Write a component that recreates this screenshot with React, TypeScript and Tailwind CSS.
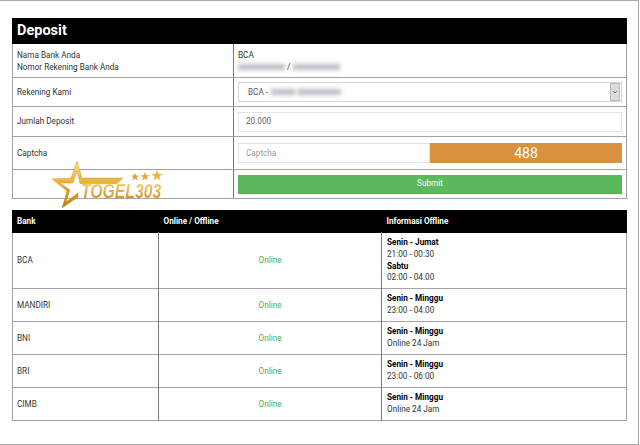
import type { ReactNode } from 'react';

const BANKS = [
  { name: 'BCA', tall: true, info: [['Senin - Jumat', '21:00 - 00:30'], ['Sabtu', '02:00 - 04.00']] },
  { name: 'MANDIRI', info: [['Senin - Minggu', '23:00 - 04.00']] },
  { name: 'BNI', info: [['Senin - Minggu', 'Online 24 Jam']] },
  { name: 'BRI', info: [['Senin - Minggu', '23:00 - 06:00']] },
  { name: 'CIMB', info: [['Senin - Minggu', 'Online 24 Jam']] },
];

function FormRow({ label, height, children, last }: { label: ReactNode; height: string; children?: ReactNode; last?: boolean }) {
  return (
    <div className={`flex ${height} ${last ? '' : 'border-b border-[#a3a3a3]'}`}>
      <div className="w-[221px] shrink-0 border-r border-[#777] pl-[4px] flex items-center">{label}</div>
      <div className="flex-1 min-w-0 px-[4px] flex items-center">{children}</div>
    </div>
  );
}

function Smudge({ className }: { className: string }) {
  return <span className={`inline-block h-[6px] bg-[#bcbcc4] blur-[2px] ${className}`} />;
}

function Logo() {
  return (
    <div className="absolute left-[51px] top-[158px] w-[112px] h-[50px]">
      <svg className="absolute left-0 top-0" width="112" height="50" viewBox="0 0 112 50">
        <defs>
          <linearGradient id="gold" x1="0" y1="0" x2="0" y2="1">
            <stop offset="0" stopColor="#fbe08a" />
            <stop offset="0.5" stopColor="#e9ac2c" />
            <stop offset="1" stopColor="#b97a12" />
          </linearGradient>
        </defs>
        <path
          d="M26 2 L31 19 L72 19 L66 24.5 L29 24.5 L26 12 L22 24 L9 24 L19 31 L15 43 L27 34 L27 38 L11 49 L16 32 L1 20 L20 19 Z"
          fill="url(#gold)"
          stroke="#c98a1a"
          strokeWidth="0.4"
        />
        <path d="M84 13.5 l1.1 3 h3.1 l-2.5 1.9 1 3.1 -2.7 -1.9 -2.7 1.9 1 -3.1 -2.5 -1.9 h3.1z" fill="#d9a53c" />
        <path d="M94 13 l1.2 3.3 h3.4 l-2.8 2 1.1 3.3 -2.9 -2 -2.9 2 1.1 -3.3 -2.8 -2 h3.4z" fill="#dfa93a" />
        <path d="M106 11 l1.5 4 h4 l-3.2 2.4 1.2 4 -3.5 -2.4 -3.5 2.4 1.2 -4 -3.2 -2.4 h4z" fill="#e8b43c" />
      </svg>
      <span className="absolute left-[30px] top-[21px] font-['Liberation_Sans',sans-serif] text-[21px] leading-[21px] font-bold italic bg-gradient-to-b from-[#fbdd80] to-[#c98a1a] bg-clip-text text-transparent scale-x-[0.75] origin-left whitespace-nowrap">
        TOGEL303
      </span>
    </div>
  );
}

export default function App() {
  return (
    <div className="relative w-[639px] h-[445px] overflow-hidden bg-white font-['Roboto',sans-serif] text-[8.2px] text-[#333] border-t border-r border-b border-[#a9a9b2] pt-[17px] pl-[12px]">
      <section className="w-[615px] border-l border-r border-b border-[#a3a3a3]">
        <h1 className="-mx-px h-[26px] bg-black pl-[5px] text-[14.5px] leading-[26px] font-bold text-white">Deposit</h1>
        <FormRow
          height="h-[34px]"
          label={
            <div className="leading-[11.5px] pt-[2px]">
              <div>Nama Bank Anda</div>
              <div>Nomor Rekening Bank Anda</div>
            </div>
          }
        >
          <div className="leading-[11.5px] pt-[2px]">
            <div>BCA</div>
            <div className="flex items-center gap-[2px]">
              <Smudge className="w-[47px]" />
              <span>/</span>
              <Smudge className="w-[47px] ml-[1px]" />
            </div>
          </div>
        </FormRow>
        <FormRow height="h-[29px]" label="Rekening Kami">
          <div className="w-full h-[20px] border border-[#d4d4d4] flex items-center pl-[9px] justify-between pr-px">
            <span className="flex items-center gap-[2px] text-[#555]">
              BCA -
              <Smudge className="w-[24px] ml-[1px]" />
              <Smudge className="w-[44px]" />
            </span>
            <span className="w-[10px] h-[18px] bg-[#dcdcdc] border border-[#bbb] flex items-center justify-center">
              <svg width="6" height="4" viewBox="0 0 6 4" fill="none" stroke="#555" strokeWidth="0.8">
                <path d="M1 1 L3 3 L5 1" />
              </svg>
            </span>
          </div>
        </FormRow>
        <FormRow height="h-[30px]" label="Jumlah Deposit">
          <div className="w-full h-[20px] border border-[#e2e2e2] flex items-center pl-[7px] text-[#666]">20.000</div>
        </FormRow>
        <FormRow height="h-[33px]" label="Captcha">
          <div className="w-full h-[20px] flex">
            <div className="w-[192px] border border-[#e2e2e2] flex items-center pl-[7px] text-[#999]">Captcha</div>
            <div className="flex-1 bg-[#d9903f] text-white text-[14px] flex items-center justify-center">488</div>
          </div>
        </FormRow>
        <FormRow height="h-[28px]" label="" last>
          <button className="w-full h-[19px] bg-[#5cb85c] border-b border-[#4cae4c] text-white text-[8.2px]">Submit</button>
        </FormRow>
      </section>

      <table className="mt-[11px] w-[615px] table-fixed border-collapse">
        <thead>
          <tr className="h-[22px] bg-black border border-black text-left text-white font-bold">
            <th className="w-[146px] pl-[4px]">Bank</th>
            <th className="w-[223px] pl-[5px]">Online / Offline</th>
            <th className="pl-[5px]">Informasi Offline</th>
          </tr>
        </thead>
        <tbody>
          {BANKS.map((bank) => (
            <tr key={bank.name} className={`${bank.tall ? 'h-[56px]' : 'h-[33px]'} border border-[#a3a3a3]`}>
              <td className="border-r border-[#777] pl-[4px]">{bank.name}</td>
              <td className="border-r border-[#777] text-center text-[#4caf50]">Online</td>
              <td className="pl-[5px] leading-[11.7px]">
                {bank.info.map(([days, hours]) => (
                  <div key={days}>
                    <div className="font-bold text-black">{days}</div>
                    <div>{hours}</div>
                  </div>
                ))}
              </td>
            </tr>
          ))}
        </tbody>
      </table>

      <Logo />
    </div>
  );
}
